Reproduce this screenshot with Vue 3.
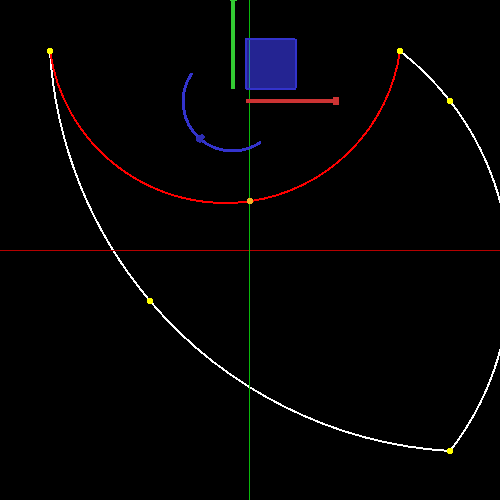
<script setup>
const points = [
  { x: 50, y: 51, color: '#ffff00' },
  { x: 400, y: 51, color: '#ffff00' },
  { x: 450, y: 101, color: '#ffff00' },
  { x: 250, y: 201, color: '#f0b428' },
  { x: 150, y: 301, color: '#ffff00' },
  { x: 450, y: 451, color: '#ffff00' }
]
</script>

<template>
  <main class="viewport">
    <svg class="scene" viewBox="0 0 500 500" role="img" aria-label="Arc editor with transform gizmo">
      <g class="curves">
        <path class="outline" d="M50 51A425.73 425.73 0 0 0 150 301A425.73 425.73 0 0 0 450 451" />
        <path class="outline" d="M400 51A285.04 285.04 0 0 1 450 101A285.04 285.04 0 0 1 450 451" />
        <path class="selected" d="M50 51A176.78 176.78 0 0 0 250 201.2A176.78 176.78 0 0 0 400 51" />
      </g>
      <rect class="axis-x" x="0" y="250" width="500" height="1" />
      <rect class="axis-y" x="249" y="0" width="1" height="500" />
      <g class="gizmo">
        <path class="rotate" d="M192 73A50 50 0 0 0 200 139A50 50 0 0 0 261 142" />
        <path class="rotate-handle" d="M196 138L199 135L202 134L205 137L203 140L200 143L196 141Z" />
        <rect class="move-y" x="231" y="0" width="4" height="89" />
        <rect class="move-y" x="230" y="0" width="7" height="1" />
        <rect class="plane" x="246" y="39" width="50" height="50" />
        <rect class="plane-axis" x="249" y="40" width="1" height="48" />
        <path class="plane-edge" d="M245 38h50v1h2v49h-1v2h-50v-1h-1zM247 40v48h48v-48z" />
        <rect class="move-x" x="246" y="99" width="88" height="4" />
        <rect class="move-x" x="333" y="97" width="6" height="8" />
      </g>
      <path
        v-for="p in points"
        :key="`${p.x}-${p.y}`"
        :fill="p.color"
        :d="`M${p.x - 2} ${p.y - 3}h4v1h1v4h-1v1h-4v-1h-1v-4h1z`"
      />
    </svg>
  </main>
</template>

<style scoped>
.viewport {
  min-height: 100vh;
  background: #000;
  overflow: hidden;
}
.scene {
  display: block;
  width: 100%;
  height: auto;
  shape-rendering: crispEdges;
}
.curves path {
  fill: none;
  stroke-width: 2;
}
.curves .outline {
  stroke: #fff;
}
.curves .selected {
  stroke: #f00;
}
.axis-x {
  fill: #b40000;
}
.axis-y {
  fill: #0ab80a;
}
.rotate {
  fill: none;
  stroke: #3333cc;
  stroke-width: 3;
}
.rotate-handle {
  fill: #2d2db4;
}
.move-y {
  fill: #33cc33;
}
.move-x {
  fill: #cc3333;
}
.plane {
  fill: #242492;
}
.plane-axis {
  fill: #248c94;
}
.plane-edge {
  fill: #3333cc;
  fill-rule: evenodd;
}
</style>

<style>
body {
  margin: 0;
  background: #000;
}
</style>
